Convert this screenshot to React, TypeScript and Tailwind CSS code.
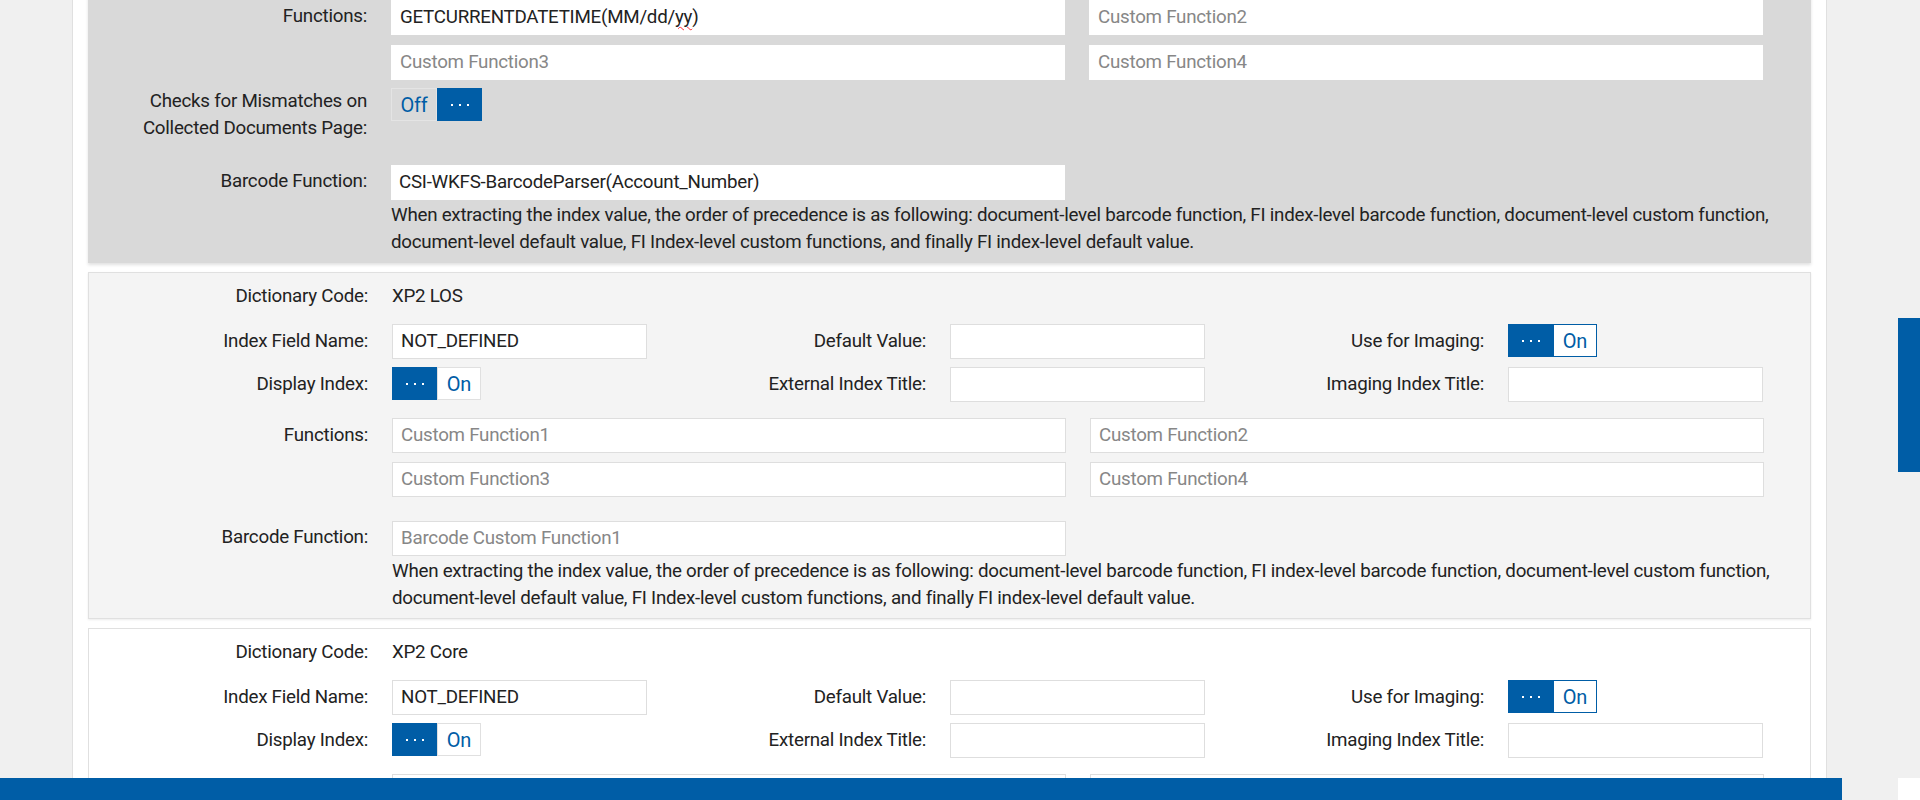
import React from "react";

const BLUE = "bg-[#005da6]";

function Field({ value, placeholder, wide, focus }: { value?: string; placeholder?: string; wide?: boolean; focus?: boolean }) {
  return (
    <div
      className={`flex h-[35px] items-center border bg-white pl-2 ${wide ? "w-full" : "w-[255px]"} ${
        focus ? "border-white" : "border-[#dedede]"
      }`}
    >
      {value ? (
        <span className="text-[#222]">{value}</span>
      ) : (
        <span className="text-[#878787]">{placeholder}</span>
      )}
    </div>
  );
}

function Dots() {
  return (
    <div className={`flex h-full w-[45px] items-center justify-center gap-[6px] ${BLUE}`}>
      <span className="size-[2px] bg-white" />
      <span className="size-[2px] bg-white" />
      <span className="size-[2px] bg-white" />
    </div>
  );
}

function Toggle({ on, active }: { on: boolean; active?: boolean }) {
  if (!on) {
    return (
      <div className="flex h-[33px] w-[91px]">
        <div className="flex h-full w-[46px] items-center justify-center border border-[#e4e4e4] text-[20px] text-[#005da6]">
          Off
        </div>
        <Dots />
      </div>
    );
  }
  return (
    <div className="flex h-[33px] w-[89px]">
      <Dots />
      <div
        className={`flex h-full w-[44px] items-center justify-center border bg-white text-[20px] text-[#005da6] ${
          active ? "border-[#005da6]" : "border-[#e0e0e0]"
        }`}
      >
        On
      </div>
    </div>
  );
}

function Label({ children, className = "" }: { children: React.ReactNode; className?: string }) {
  return <div className={`w-[279px] shrink-0 text-right ${className}`}>{children}</div>;
}

function Col({ label, children }: { label: string; children: React.ReactNode }) {
  return (
    <div className="flex w-[558px] shrink-0 items-start gap-6">
      <Label className="leading-[34px]">{label}</Label>
      {children}
    </div>
  );
}

function FunctionsRow({ values }: { values: { value?: string; placeholder?: string }[] }) {
  return (
    <div className="flex items-start gap-6">
      <Label className="leading-[34px]">Functions:</Label>
      <div className="grid w-[1372px] grid-cols-2 gap-x-6 gap-y-[9px]">
        {values.map((v, i) => (
          <Field key={i} wide value={v.value} placeholder={v.placeholder} />
        ))}
      </div>
    </div>
  );
}

function Helper() {
  return (
    <div className="mt-[2px] flex gap-6">
      <div className="w-[279px] shrink-0" />
      <p className="pr-3 leading-[27px]">
        When extracting the index value, the order of precedence is as following: document-level barcode function, FI
        index-level barcode function, document-level custom function, document-level default value, FI Index-level custom
        functions, and finally FI index-level default value.
      </p>
    </div>
  );
}

function IndexPanel({ code, white }: { code: string; white?: boolean }) {
  return (
    <div
      className={`border border-[#e0e0e0] pb-[6px] pt-[10px] ${
        white ? "bg-white" : "bg-[#f4f4f4] shadow-[0_1px_2px_rgba(0,0,0,0.08)]"
      }`}
    >
      <div className="flex gap-6 leading-[27px]">
        <Label>Dictionary Code:</Label>
        <span>{code}</span>
      </div>

      <div className="mt-[14px] flex">
        <Col label="Index Field Name:">
          <Field value="NOT_DEFINED" />
        </Col>
        <Col label="Default Value:">
          <Field />
        </Col>
        <Col label="Use for Imaging:">
          <Toggle on active />
        </Col>
      </div>
      <div className="mt-2 flex">
        <Col label="Display Index:">
          <Toggle on />
        </Col>
        <Col label="External Index Title:">
          <Field />
        </Col>
        <Col label="Imaging Index Title:">
          <Field />
        </Col>
      </div>

      <div className="mt-4">
        <FunctionsRow
          values={[
            { placeholder: "Custom Function1" },
            { placeholder: "Custom Function2" },
            { placeholder: "Custom Function3" },
            { placeholder: "Custom Function4" },
          ]}
        />
      </div>

      <div className="mt-6 flex items-start gap-6">
        <Label className="leading-[32px]">Barcode Function:</Label>
        <div className="w-[674px]">
          <Field wide placeholder="Barcode Custom Function1" />
        </div>
      </div>
      <Helper />
    </div>
  );
}

export default function App() {
  return (
    <div className="relative h-[800px] w-[1920px] overflow-hidden bg-[#f0f0f0] font-[Roboto,sans-serif] text-[18.75px] tracking-[-0.25px] text-[#222]">
      <div className="ml-[72px] h-full w-[1755px] border-x border-[#e0e0e0] bg-white px-[15px]">
        <div className="flex flex-col gap-[9px]">
          {/* panel scrolled partly out of view */}
          <div className="-mt-[20px] bg-[#d9d9d9] pb-[7px] pt-[20px] shadow-[0_2px_3px_rgba(0,0,0,0.12)]">
            <div className="flex items-start gap-6">
              <Label className="leading-[32px]">Functions:</Label>
              <div className="grid w-[1372px] grid-cols-2 gap-x-6 gap-y-[10px]">
                <div className="flex h-[35px] items-center border border-white bg-white pl-2">
                  <span>
                    GETCURRENTDATETIME(MM/dd/
                    <span className="underline decoration-red-500 decoration-wavy decoration-1 underline-offset-[3px]">
                      yy
                    </span>
                    )
                  </span>
                </div>
                <Field wide focus placeholder="Custom Function2" />
                <Field wide focus placeholder="Custom Function3" />
                <Field wide focus placeholder="Custom Function4" />
              </div>
            </div>

            <div className="mt-2 flex items-start gap-6">
              <Label className="leading-[27px]">
                Checks for Mismatches on
                <br />
                Collected Documents Page:
              </Label>
              <Toggle on={false} />
            </div>

            <div className="mt-[23px] flex items-start gap-6">
              <Label className="leading-[32px]">Barcode Function:</Label>
              <div className="flex h-[35px] w-[674px] items-center bg-white pl-2">
                CSI-WKFS-BarcodeParser(Account_Number)
              </div>
            </div>
            <Helper />
          </div>

          <IndexPanel code="XP2 LOS" />
          <IndexPanel code="XP2 Core" white />
        </div>
      </div>

      <div className={`absolute right-0 top-[318px] h-[154px] w-[22px] ${BLUE}`} />
      <div className={`absolute bottom-0 left-0 h-[22px] w-[1842px] ${BLUE}`} />
      <div className="absolute bottom-0 right-0 h-[22px] w-[22px] bg-white" />
    </div>
  );
}
